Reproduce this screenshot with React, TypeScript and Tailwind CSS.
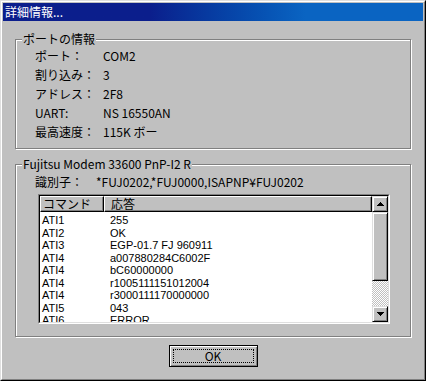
import React from 'react';

const rows: [string, string][] = [
  ['ATI1', '255'],
  ['ATI2', 'OK'],
  ['ATI3', 'EGP-01.7 FJ 960911'],
  ['ATI4', 'a007880284C6002F'],
  ['ATI4', 'bC60000000'],
  ['ATI4', 'r1005111151012004'],
  ['ATI4', 'r3000111170000000'],
  ['ATI5', '043'],
  ['ATI6', 'ERROR'],
];

const portInfo: [string, string][] = [
  ['ポート：', 'COM2'],
  ['割り込み：', '3'],
  ['アドレス：', '2F8'],
  ['UART:', 'NS 16550AN'],
  ['最高速度：', '115K ボー'],
];

function GroupBox({ label, className, children }: { label: string; className?: string; children: React.ReactNode }) {
  return (
    <div className={`relative border border-[#808080] shadow-[inset_1px_1px_0_#ffffff,1px_1px_0_#ffffff] ${className ?? ''}`}>
      <span className="absolute left-[6px] -top-[9px] bg-[#c0c0c0] px-[1px] leading-[16px] whitespace-nowrap">{label}</span>
      {children}
    </div>
  );
}

function Arrow({ up }: { up?: boolean }) {
  return (
    <svg width="7" height="4" viewBox="0 0 7 4" shapeRendering="crispEdges" className={up ? '' : 'rotate-180'}>
      <rect x="3" y="0" width="1" height="1" fill="#000" />
      <rect x="2" y="1" width="3" height="1" fill="#000" />
      <rect x="1" y="2" width="5" height="1" fill="#000" />
      <rect x="0" y="3" width="7" height="1" fill="#000" />
    </svg>
  );
}

const raised =
  'border border-t-[#dfdfdf] border-l-[#dfdfdf] border-r-black border-b-black shadow-[inset_1px_1px_0_#ffffff,inset_-1px_-1px_0_#808080] bg-[#c0c0c0]';

function ScrollBar() {
  return (
    <div className="w-[16px] flex flex-col">
      <div className={`h-[16px] flex items-center justify-center ${raised}`}>
        <Arrow up />
      </div>
      <div className={`h-[69px] ${raised}`} />
      <div className="flex-1 bg-[image:repeating-conic-gradient(#ffffff_0%_25%,#c0c0c0_0%_50%)] bg-[length:2px_2px]" />
      <div className={`h-[16px] flex items-center justify-center ${raised}`}>
        <Arrow />
      </div>
    </div>
  );
}

export default function App() {
  return (
    <div className="w-[426px] h-[381px] bg-[#c0c0c0] text-[12px] text-black font-['Noto_Sans_CJK_JP','Liberation_Sans',sans-serif] border border-t-[#dfdfdf] border-l-[#dfdfdf] border-r-black border-b-black">
      <div className="h-full flex flex-col p-[1px] border border-t-white border-l-white border-r-[#808080] border-b-[#808080]">
        {/* Title bar */}
        <div className="h-[18px] flex items-center pl-[2px] bg-linear-to-r from-[#0b1e8c] from-[35%] to-[#0a64c2] to-[72%] text-white leading-none">
          詳細情報...
        </div>

        <div className="flex flex-col px-[12px]">
          {/* Port info */}
          <GroupBox label="ポートの情報" className="mt-[18px] pt-[6px] pb-[7px] pl-[19px]">
            <div className="grid grid-cols-[68px_1fr] leading-[19px]">
              {portInfo.map(([k, v]) => (
                <React.Fragment key={k}>
                  <span>{k}</span>
                  <span>{v}</span>
                </React.Fragment>
              ))}
            </div>
          </GroupBox>

          {/* Modem */}
          <GroupBox label="Fujitsu Modem 33600 PnP-I2 R" className="mt-[15px] pt-[7px] pb-[12px]">
            <div className="flex pl-[19px] leading-[19px]">
              <span className="w-[61px]">識別子：</span>
              <span>*FUJ0202,*FUJ0000,ISAPNP¥FUJ0202</span>
            </div>

            <div className="mt-[3px] ml-[22px] mr-[20px] border border-t-[#808080] border-l-[#808080] border-r-white border-b-white">
              <div className="h-[128px] flex border border-t-black border-l-black border-r-[#dfdfdf] border-b-[#dfdfdf] bg-white">
                <div className="flex-1 flex flex-col overflow-hidden">
                  <div className="h-[16px] flex bg-[#c0c0c0] leading-none">
                    <div className="w-[64px] flex items-center pl-[2px] border border-t-white border-l-white border-r-black border-b-black shadow-[inset_-1px_-1px_0_#808080]">
                      コマンド
                    </div>
                    <div className="flex-1 flex items-center pl-[6px] border border-t-white border-l-white border-r-black border-b-black shadow-[inset_-1px_-1px_0_#808080]">
                      応答
                    </div>
                  </div>
                  <div className="h-[110px] overflow-hidden pt-[2px] font-['Liberation_Sans',sans-serif] text-[11px]">
                    {rows.map(([c, r], i) => (
                      <div key={i} className="flex h-[12.5px] leading-[12.5px]">
                        <span className="w-[70px] pl-[2px]">{c}</span>
                        <span>{r}</span>
                      </div>
                    ))}
                  </div>
                </div>
                <ScrollBar />
              </div>
            </div>
          </GroupBox>

          {/* OK */}
          <button className="self-center mt-[8px] w-[89px] h-[22px] border border-black bg-[#c0c0c0] p-0">
            <div className="h-full p-[3px] shadow-[inset_1px_1px_0_#ffffff,inset_-1px_-1px_0_#808080]">
              <div className="h-full flex items-center justify-center border border-dotted border-black leading-none">
                OK
              </div>
            </div>
          </button>
        </div>
      </div>
    </div>
  );
}
